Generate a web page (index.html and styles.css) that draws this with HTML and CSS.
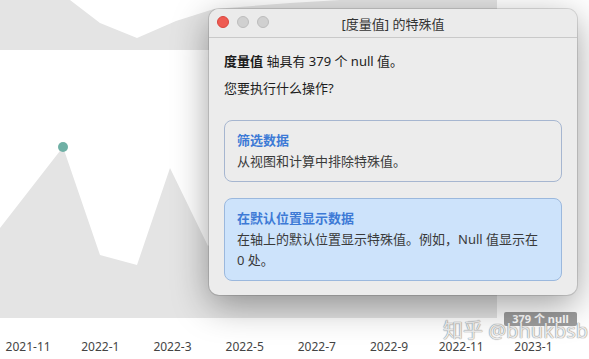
FILE: index.html
```html
<!DOCTYPE html>
<html lang="zh-CN">
<head>
    <meta charset="UTF-8">
    <title>特殊值</title>
    <link rel="stylesheet" href="styles.css">
</head>
<body>
    <div class="stage">
        <svg class="chart" width="589" height="318" viewBox="0 0 589 318">
            <path d="M0 0 H497 V50 H0 Z" fill="#e4e4e4"/>
            <path d="M70 0 L100 23 L137 38 L176 21 L214 9 L290 3 L340 0 Z" fill="#ffffff"/>
            <path d="M0 228 L63 147 L100 255 L137 265 L170 168 L208 246 L260 200 L497 200 L497 318 L0 318 Z" fill="#e4e4e4"/>
            <circle cx="63" cy="147" r="5" fill="#6fb0a5"/>
        </svg>
        <div class="axis">
            <span>2021-11</span>
            <span>2022-1</span>
            <span>2022-3</span>
            <span>2022-5</span>
            <span>2022-7</span>
            <span>2022-9</span>
            <span>2022-11</span>
            <span>2023-1</span>
        </div>
        <div class="null-tip">379 个 null</div>
        <div class="watermark">知乎 @bhukbsb</div>

        <div class="dialog">
            <div class="titlebar">
                <div class="lights">
                    <span class="light close"></span>
                    <span class="light"></span>
                    <span class="light"></span>
                </div>
                <div class="title">[度量值] 的特殊值</div>
            </div>
            <div class="dialog-body">
                <p class="msg"><b>度量值</b> 轴具有 379 个 null 值。</p>
                <p class="msg ask">您要执行什么操作?</p>
                <div class="choice">
                    <div class="choice-title">筛选数据</div>
                    <div class="choice-desc">从视图和计算中排除特殊值。</div>
                </div>
                <div class="choice selected">
                    <div class="choice-title">在默认位置显示数据</div>
                    <div class="choice-desc">在轴上的默认位置显示特殊值。例如，Null 值显示在 0 处。</div>
                </div>
            </div>
        </div>
    </div>
</body>
</html>
```

FILE: styles.css
```css
* {
    box-sizing: border-box;
    margin: 0;
    padding: 0;
}
body {
    background-color: white;
    font-family: 'Noto Sans', 'Noto Sans CJK SC', sans-serif;
    color: #262626;
}
.stage {
    position: relative;
    width: 589px;
    height: 359px;
    overflow: hidden;
    display: flex;
    flex-direction: column;
}
.chart {
    display: block;
}
.axis {
    display: flex;
    margin-left: -8px;
    padding-top: 20px;
    font-size: 12px;
    line-height: 18px;
    color: #444;
}
.axis span {
    width: 72.2px;
    text-align: center;
    flex-shrink: 0;
}
.null-tip {
    position: absolute;
    left: 504px;
    top: 312px;
    width: 73px;
    height: 14px;
    background-color: #9d9d9d;
    color: white;
    font-size: 11px;
    font-weight: bold;
    line-height: 14px;
    text-align: center;
    border-radius: 2px;
}
.watermark {
    position: absolute;
    left: 443px;
    top: 319px;
    font-size: 20px;
    line-height: 24px;
    color: rgba(255, 255, 255, 0.85);
    text-shadow: 0 0 1px #8a8a8a, 0 0 1px #8a8a8a;
    white-space: nowrap;
}
.dialog {
    position: absolute;
    left: 209px;
    top: 9px;
    width: 368px;
    height: 286px;
    background-color: #ececec;
    border-radius: 10px;
    box-shadow: 0 0 0 1px rgba(0, 0, 0, 0.12), 0 10px 36px rgba(0, 0, 0, 0.38);
    overflow: hidden;
}
.titlebar {
    position: relative;
    height: 29px;
    background-color: #ebebeb;
    border-bottom: 1px solid #c9c9c9;
    display: flex;
    align-items: center;
    justify-content: center;
}
.lights {
    position: absolute;
    left: 8px;
    top: 7px;
    display: flex;
    gap: 8px;
}
.light {
    width: 12px;
    height: 12px;
    border-radius: 50%;
    background-color: #d0d0d0;
    border: 1px solid #bcbcbc;
}
.light.close {
    background-color: #ee5b52;
    border-color: #d8463e;
}
.title {
    font-size: 13px;
    color: #333;
}
.dialog-body {
    padding: 13px 15px 14px;
}
.msg {
    font-size: 13px;
    line-height: 20px;
    color: #1c1c1c;
}
.msg b {
    font-weight: bold;
}
.ask {
    margin-top: 7px;
    margin-bottom: 22px;
}
.choice {
    border: 1px solid #a6b6d0;
    border-radius: 8px;
    padding: 9px 20px 9px 12px;
    margin-bottom: 16px;
}
.choice.selected {
    background-color: #cde3fb;
    border-color: #9bb8dd;
    margin-bottom: 0;
}
.choice-title {
    font-size: 13px;
    line-height: 21px;
    font-weight: bold;
    color: #3d7ad6;
}
.choice-desc {
    font-size: 13px;
    line-height: 21px;
    color: #3a3a3a;
}
```
